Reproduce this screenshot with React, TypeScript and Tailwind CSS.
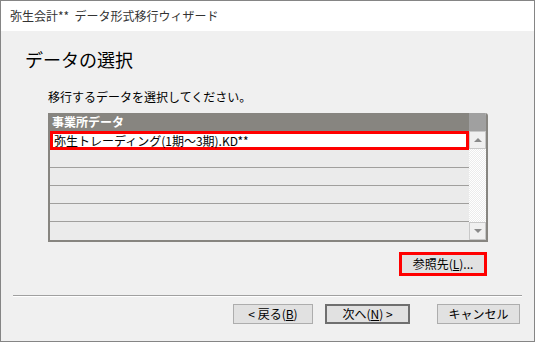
import React from "react";

const font = { fontFamily: '"Noto Sans CJK JP", "Liberation Sans", sans-serif' };

function WinButton({ children, w, isDefault }: { children: React.ReactNode; w: string; isDefault?: boolean }) {
  return (
    <div
      className={`${w} h-[20px] flex items-center justify-center bg-[#e1e1e1] text-[12px] text-black ${
        isDefault ? "border-2 border-[#6f6f6f]" : "border border-[#adadad]"
      }`}
    >
      {children}
    </div>
  );
}

export default function App() {
  const emptyRows = [0, 1, 2, 3, 4];

  return (
    <div className="w-[535px] h-[342px] border border-[#858585] bg-[#f0f0f0] flex flex-col" style={font}>
      {/* title bar */}
      <div className="h-[30px] bg-white flex items-center pl-[9px] text-[12px] text-[#333]">
        弥生会計**&nbsp;&nbsp;データ形式移行ウィザード
      </div>

      <div className="pl-[24px] mt-[17px] text-[18px] leading-[22px] text-black">データの選択</div>

      <div className="pl-[47px] mt-[19px] text-[12px] leading-[16px] text-black">移行するデータを選択してください。</div>

      {/* list */}
      <div className="ml-[47px] mt-[8px] w-[440px] flex border-l-2 border-r-2 border-b-2 border-[#878580] rounded-tr-[3px] overflow-hidden">
        <div className="flex-1 flex flex-col">
          <div className="h-[18px] bg-[#878580] text-white font-bold text-[12px] leading-[18px] pl-[2px]">事業所データ</div>
          <div className="h-[19px] bg-white border-[3px] border-[#ff0000] text-[12px] leading-[13px] pl-[1px] text-black">
            弥生トレーディング(1期～3期).KD**
          </div>
          {emptyRows.map((i) => (
            <div
              key={i}
              className={`h-[18px] bg-[#ebebeb] ${i < 4 ? "border-b border-[#a09f9d]" : ""}`}
            />
          ))}
        </div>
        <div className="w-[17px] flex flex-col">
          <div className="h-[18px] bg-[#a0a0a0]" />
          <div className="h-[18px] bg-[#f0f0f0] border border-[#c8c8c8] flex items-center justify-center">
            <div className="w-0 h-0 border-l-[4px] border-r-[4px] border-b-[4px] border-l-transparent border-r-transparent border-b-[#8a8a8a]" />
          </div>
          <div className="flex-1 bg-[repeating-conic-gradient(#ececec_0%_25%,#ffffff_0%_50%)] bg-[length:2px_2px]" />
          <div className="h-[18px] bg-[#f0f0f0] border border-[#c8c8c8] flex items-center justify-center">
            <div className="w-0 h-0 border-l-[4px] border-r-[4px] border-t-[4px] border-l-transparent border-r-transparent border-t-[#8a8a8a]" />
          </div>
        </div>
      </div>

      {/* browse button */}
      <div className="flex justify-end pr-[47px] mt-[10px]">
        <div className="w-[88px] h-[24px] border-[3px] border-[#ff0000] bg-[#e1e1e1] flex items-center justify-center text-[12px] text-black">
          参照先(<span className="underline">L</span>)...
        </div>
      </div>

      {/* separator */}
      <div className="mx-[12px] mt-[19px] h-[2px] border-t border-[#a0a0a0] border-b border-b-white" />

      {/* bottom buttons */}
      <div className="flex justify-end pr-[14px] mt-[7px]">
        <WinButton w="w-[80px]">
          &lt; 戻る(<span className="underline">B</span>)
        </WinButton>
        <div className="ml-[12px]">
          <WinButton w="w-[85px]" isDefault>
            次へ(<span className="underline">N</span>) &gt;
          </WinButton>
        </div>
        <div className="ml-[27px]">
          <WinButton w="w-[83px]">キャンセル</WinButton>
        </div>
      </div>
    </div>
  );
}
